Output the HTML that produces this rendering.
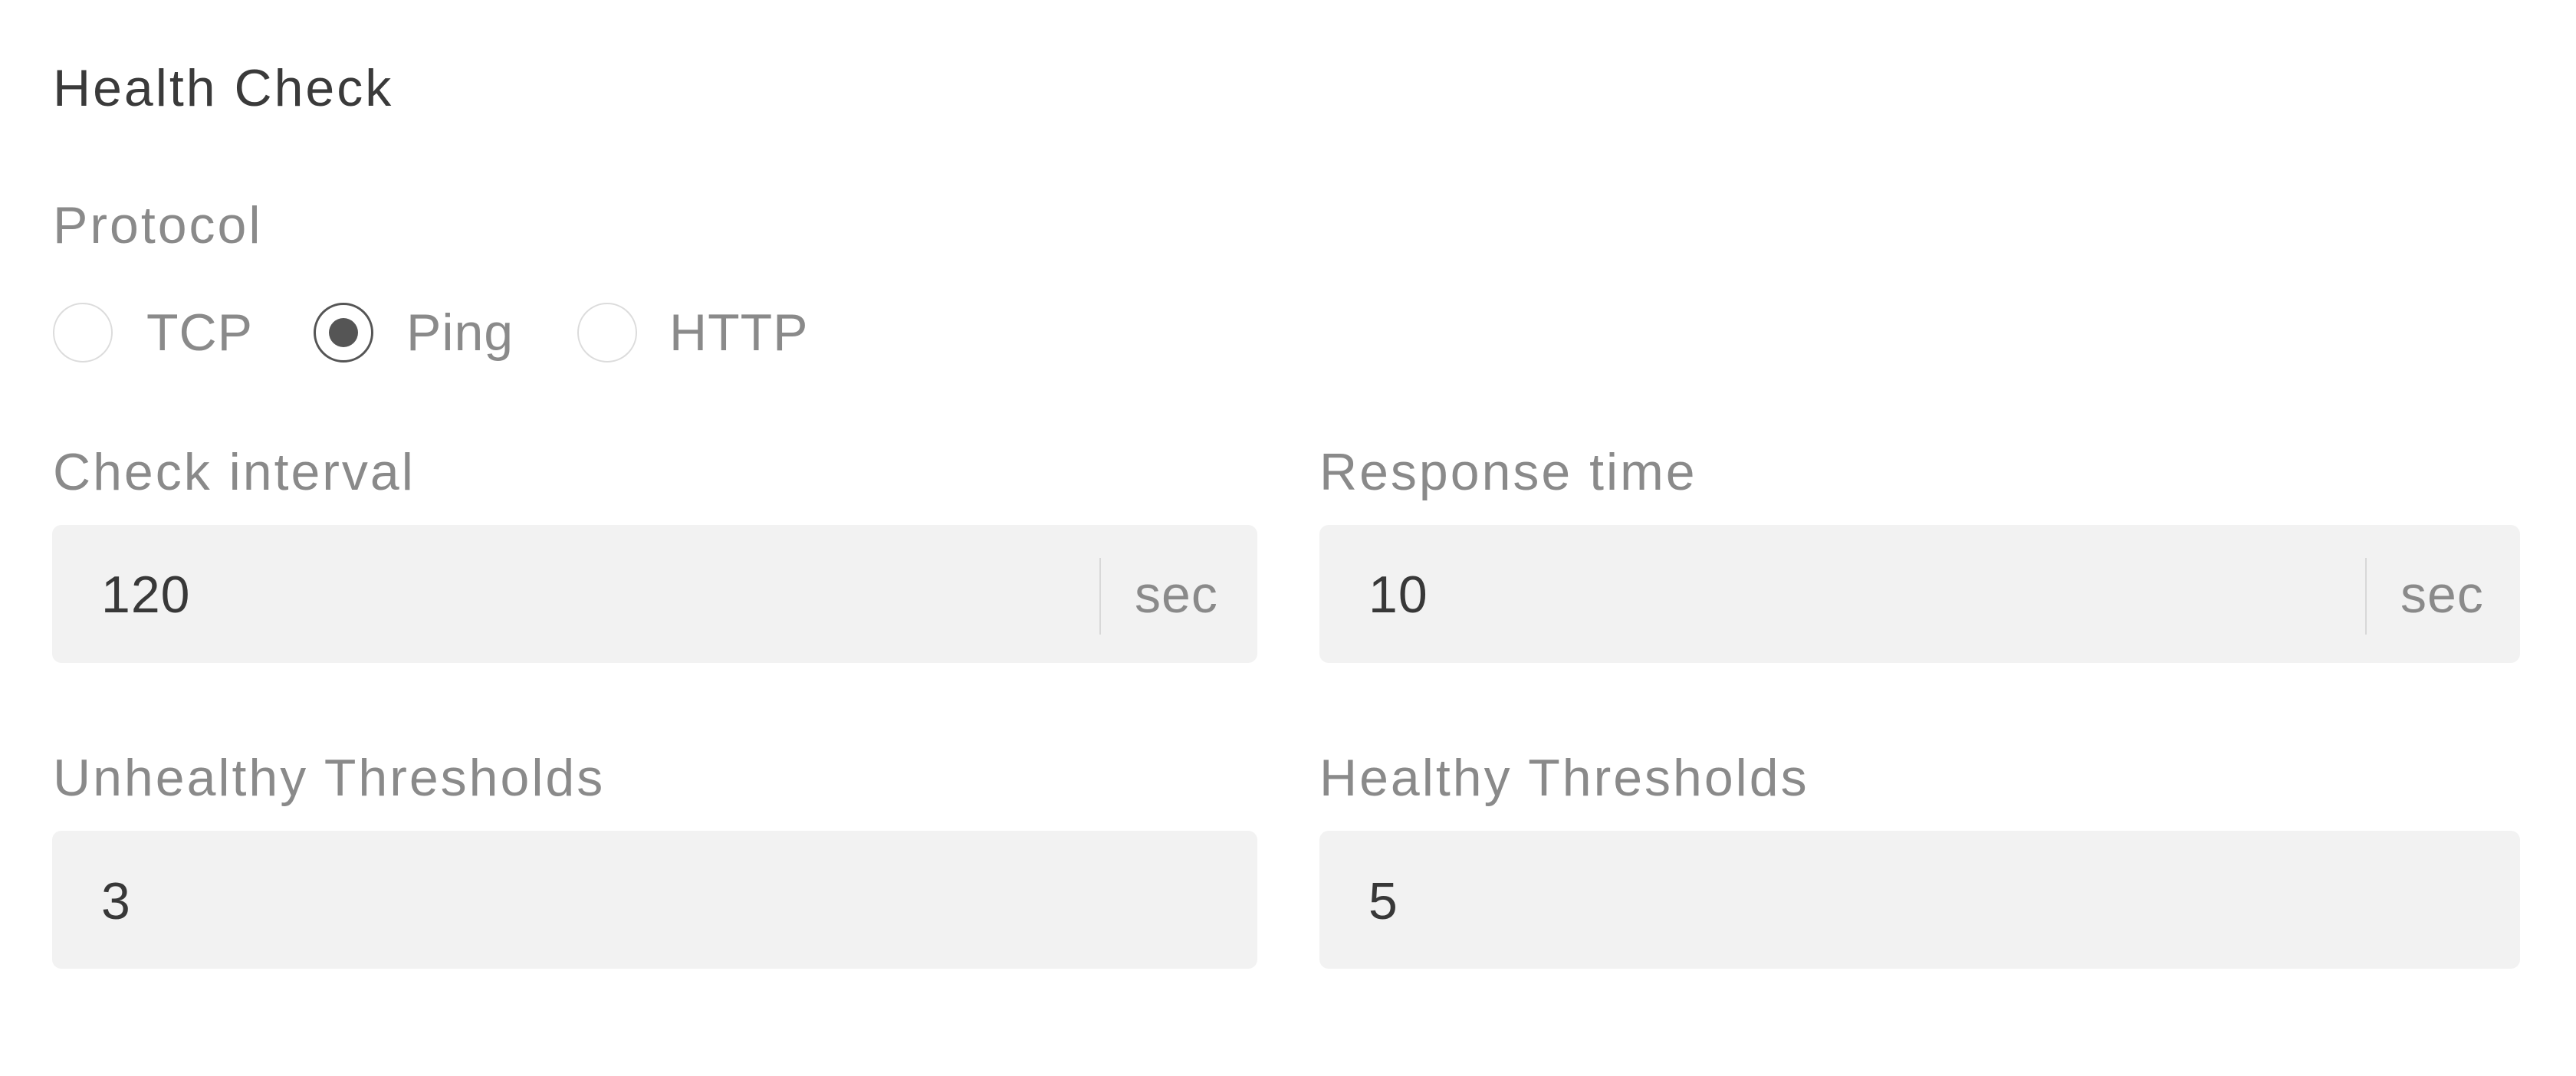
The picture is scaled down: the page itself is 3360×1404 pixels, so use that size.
<!DOCTYPE html>
<html><head><meta charset="utf-8"><style>
html,body{margin:0;padding:0;background:#fff;}
body{width:3360px;height:1404px;position:relative;overflow:hidden;font-family:"Liberation Sans",Arial,sans-serif;}
.t{position:absolute;font-size:68px;line-height:68px;white-space:nowrap;letter-spacing:3px;}
.s{letter-spacing:1px;}
.lbl{color:#8a8a8a;}
.val{color:#383838;}
.box{position:absolute;background:#f2f2f2;border-radius:12px;height:180px;}
.div{position:absolute;width:2px;background:#d8d8d8;top:43px;height:100px;}
.r{position:absolute;top:395px;width:74px;height:74px;border:2px solid #dcdcdc;border-radius:50%;box-sizing:content-box;}
</style></head><body>
<div class="t" style="left:69px;top:81px;color:#3a3a3a;">Health Check</div>
<div class="t lbl" style="left:69px;top:260px;">Protocol</div>

<div class="r" style="left:69px;"></div>
<div class="t lbl s" style="left:191px;top:400px;">TCP</div>
<div class="r" style="left:409px;border:3px solid #555;width:72px;height:72px;"><div style="position:absolute;left:17px;top:17px;width:38px;height:38px;border-radius:50%;background:#555;"></div></div>
<div class="t lbl s" style="left:530px;top:400px;">Ping</div>
<div class="r" style="left:753px;"></div>
<div class="t lbl s" style="left:873px;top:400px;">HTTP</div>

<div class="t lbl" style="left:69px;top:582px;">Check interval</div>
<div class="t lbl" style="left:1721px;top:582px;">Response time</div>

<div class="box" style="left:68px;top:685px;width:1572px;"><div class="div" style="left:1366px;"></div></div>
<div class="t val s" style="left:132px;top:742px;">120</div>
<div class="t lbl s" style="left:1480px;top:742px;">sec</div>

<div class="box" style="left:1721px;top:685px;width:1566px;"><div class="div" style="left:1364px;"></div></div>
<div class="t val s" style="left:1785px;top:742px;">10</div>
<div class="t lbl s" style="left:3131px;top:742px;">sec</div>

<div class="t lbl" style="left:69px;top:981px;">Unhealthy Thresholds</div>
<div class="t lbl" style="left:1721px;top:981px;">Healthy Thresholds</div>

<div class="box" style="left:68px;top:1084px;width:1572px;"></div>
<div class="t val s" style="left:132px;top:1142px;">3</div>
<div class="box" style="left:1721px;top:1084px;width:1566px;"></div>
<div class="t val s" style="left:1785px;top:1142px;">5</div>
</body></html>
